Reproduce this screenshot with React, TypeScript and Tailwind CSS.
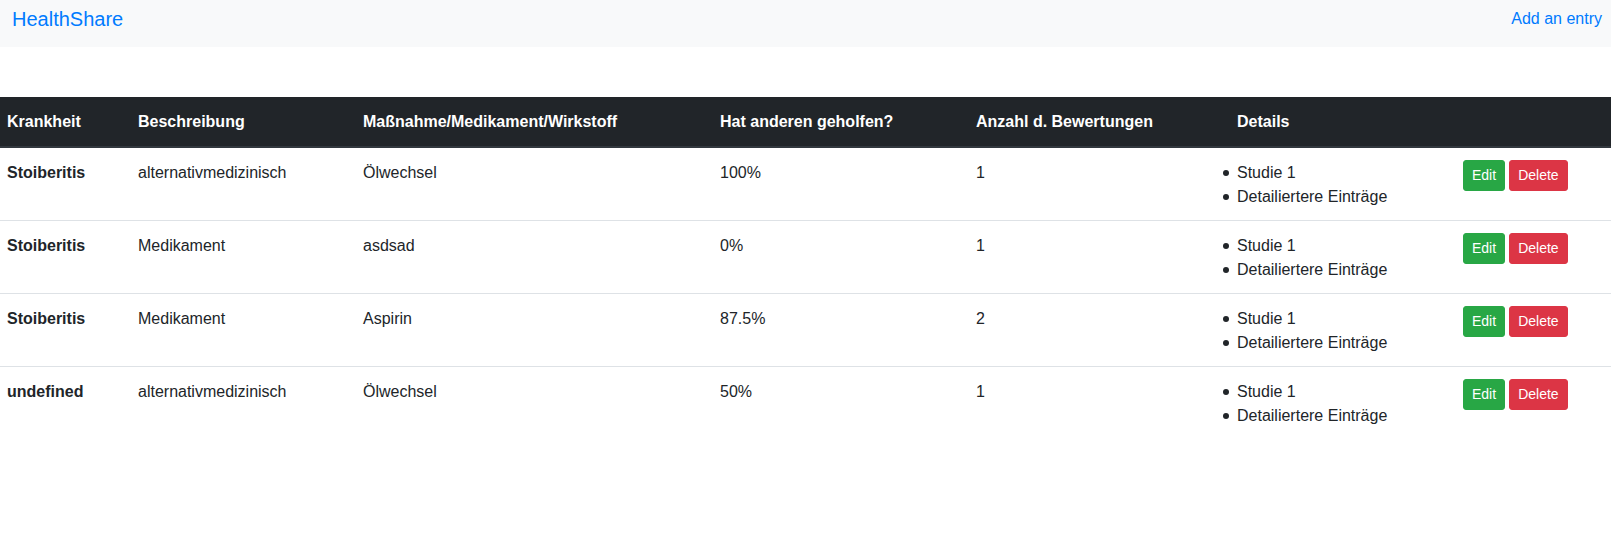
import React from "react";

type Entry = {
  krankheit: string;
  beschreibung: string;
  massnahme: string;
  geholfen: string;
  anzahl: number;
};

const entries: Entry[] = [
  { krankheit: "Stoiberitis", beschreibung: "alternativmedizinisch", massnahme: "Ölwechsel", geholfen: "100%", anzahl: 1 },
  { krankheit: "Stoiberitis", beschreibung: "Medikament", massnahme: "asdsad", geholfen: "0%", anzahl: 1 },
  { krankheit: "Stoiberitis", beschreibung: "Medikament", massnahme: "Aspirin", geholfen: "87.5%", anzahl: 2 },
  { krankheit: "undefined", beschreibung: "alternativmedizinisch", massnahme: "Ölwechsel", geholfen: "50%", anzahl: 1 },
];

const th = "border-b-2 border-[#32383e] px-[7px] pt-[13px] pb-[12px] text-left font-bold";
const td = "px-[7px] pt-[13px] pb-[11px] align-top";

export default function App() {
  return (
    <div
      className="min-h-screen bg-white text-[#212529] text-[16px] leading-6"
      style={{ fontFamily: '"Liberation Sans", Arial, sans-serif' }}
    >
      <nav className="flex h-[47px] items-start justify-between bg-[#f8f9fa] pl-[12px] pr-[9px]">
        <a className="mt-[4px] text-[20px] leading-[30px] text-[#007bff]">HealthShare</a>
        <a className="mt-[7px] text-[16px] text-[#007bff]">Add an entry</a>
      </nav>

      <table className="mt-[50px] w-full table-fixed border-collapse">
        <thead className="bg-[#212529] text-white">
          <tr>
            <th className={`w-[131px] ${th}`}>Krankheit</th>
            <th className={`w-[225px] ${th}`}>Beschreibung</th>
            <th className={`w-[357px] ${th}`}>Maßnahme/Medikament/Wirkstoff</th>
            <th className={`w-[256px] ${th}`}>Hat anderen geholfen?</th>
            <th className={`w-[261px] ${th}`}>Anzahl d. Bewertungen</th>
            <th className={`w-[226px] ${th}`}>Details</th>
            <th className={th}></th>
          </tr>
        </thead>
        <tbody>
          {entries.map((e, i) => (
            <tr key={i} className={i === 0 ? "" : "border-t border-[#dee2e6]"}>
              <td className={`${td} font-bold`}>{e.krankheit}</td>
              <td className={td}>{e.beschreibung}</td>
              <td className={td}>{e.massnahme}</td>
              <td className={td}>{e.geholfen}</td>
              <td className={td}>{e.anzahl}</td>
              <td className={td}>
                <ul>
                  <li className="flex items-center">
                    <span className="-ml-[14px] mr-[8px] h-[6px] w-[6px] rounded-full bg-[#212529]" />
                    Studie 1
                  </li>
                  <li className="flex items-center">
                    <span className="-ml-[14px] mr-[8px] h-[6px] w-[6px] rounded-full bg-[#212529]" />
                    Detailiertere Einträge
                  </li>
                </ul>
              </td>
              <td className="px-[7px] py-[12px] align-top">
                <div className="flex gap-[4px]">
                  <button className="rounded-[3px] border border-[#28a745] bg-[#28a745] px-2 py-1 text-[14px] leading-[21px] text-white">
                    Edit
                  </button>
                  <button className="rounded-[3px] border border-[#dc3545] bg-[#dc3545] px-2 py-1 text-[14px] leading-[21px] text-white">
                    Delete
                  </button>
                </div>
              </td>
            </tr>
          ))}
        </tbody>
      </table>
    </div>
  );
}
